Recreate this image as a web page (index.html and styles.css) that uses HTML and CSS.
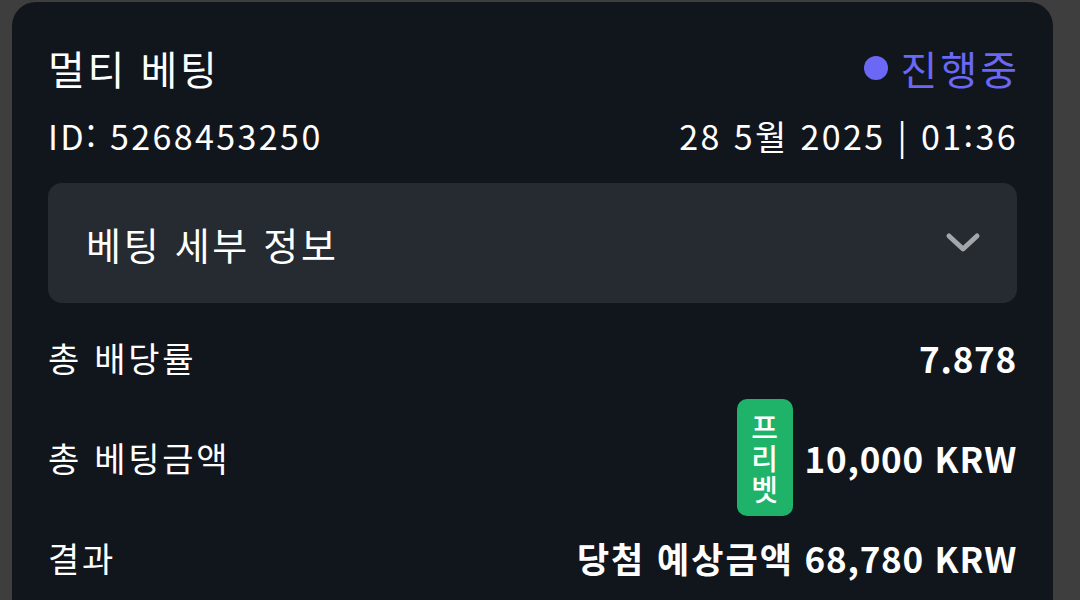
FILE: index.html
```html
<!DOCTYPE html>
<html lang="ko">
<head>
    <meta charset="UTF-8">
    <meta name="viewport" content="width=device-width, initial-scale=1.0">
    <title>멀티 베팅</title>
    <link rel="stylesheet" href="styles.css">
</head>
<body>

<div class="bet-card">
    <div class="bet-head">
        <span class="bet-title">멀티 베팅</span>
        <span class="bet-status"><span class="status-dot"></span>진행중</span>
    </div>
    <div class="bet-meta">
        <span>ID: 5268453250</span>
        <span>28 5월 2025 | 01:36</span>
    </div>
    <div class="bet-details">
        <span>베팅 세부 정보</span>
        <svg class="chevron" width="36" height="22" viewBox="0 0 36 22">
            <path d="M4 4 L18 17 L32 4" fill="none" stroke="#a4a6a9" stroke-width="5" stroke-linecap="round" stroke-linejoin="round"/>
        </svg>
    </div>
    <div class="bet-row first-row">
        <span class="row-label">총 배당률</span>
        <span class="row-value">7.878</span>
    </div>
    <div class="bet-row">
        <span class="row-label">총 베팅금액</span>
        <span class="row-value">
            <span class="free-badge">프<br>리<br>벳</span>
            10,000 KRW
        </span>
    </div>
    <div class="bet-row">
        <span class="row-label">결과</span>
        <span class="row-value"><span class="value-word">당첨 예상금액</span>&nbsp;68,780 KRW</span>
    </div>
</div>

</body>
</html>
```

FILE: styles.css
```css
body {
    margin: 0;
    background-color: #3e3e3e;
    font-family: "Noto Sans CJK KR", "Noto Sans", sans-serif;
    color: #fff;
    height: 600px;
    overflow: hidden;
}
.bet-card {
    background: #11161d;
    margin: 2px 27px 0 12px;
    padding: 30px 36px 0;
    border-radius: 24px 24px 0 0;
    height: 600px;
    box-sizing: border-box;
}
.bet-head, .bet-meta, .bet-row {
    display: flex;
    justify-content: space-between;
    align-items: center;
}
.bet-head {
    height: 72px;
}
.bet-title {
    font-size: 40px;
    letter-spacing: 2.6px;
}
.bet-status {
    display: flex;
    align-items: center;
    font-size: 40px;
    letter-spacing: 3px;
    color: #6b68f5;
    margin-right: -3px;
}
.status-dot {
    width: 24px;
    height: 24px;
    border-radius: 50%;
    background: #6b68f5;
    margin-right: 13px;
}
.bet-meta {
    height: 62px;
    font-size: 34px;
    letter-spacing: 2.4px;
    margin-right: -1px;
}
.bet-details {
    margin-top: 17px;
    height: 120px;
    background: #262a31;
    border-radius: 14px;
    display: flex;
    justify-content: space-between;
    align-items: center;
    padding: 0 36px 0 38px;
    font-size: 38px;
    letter-spacing: 2.7px;
}
.bet-row {
    height: 100px;
}
.first-row {
    margin-top: 4px;
}
.row-label {
    font-size: 34px;
    letter-spacing: 2.7px;
}
.row-value {
    display: flex;
    align-items: center;
    font-size: 35px;
    font-weight: bold;
    letter-spacing: 0.8px;
}
.value-word {
    letter-spacing: 2px;
}
.free-badge {
    background: #1fb36a;
    border-radius: 10px;
    width: 56px;
    height: 117px;
    display: flex;
    align-items: center;
    justify-content: center;
    text-align: center;
    font-size: 29px;
    line-height: 31px;
    font-weight: 500;
    letter-spacing: 0;
    margin-right: 12px;
}
```
